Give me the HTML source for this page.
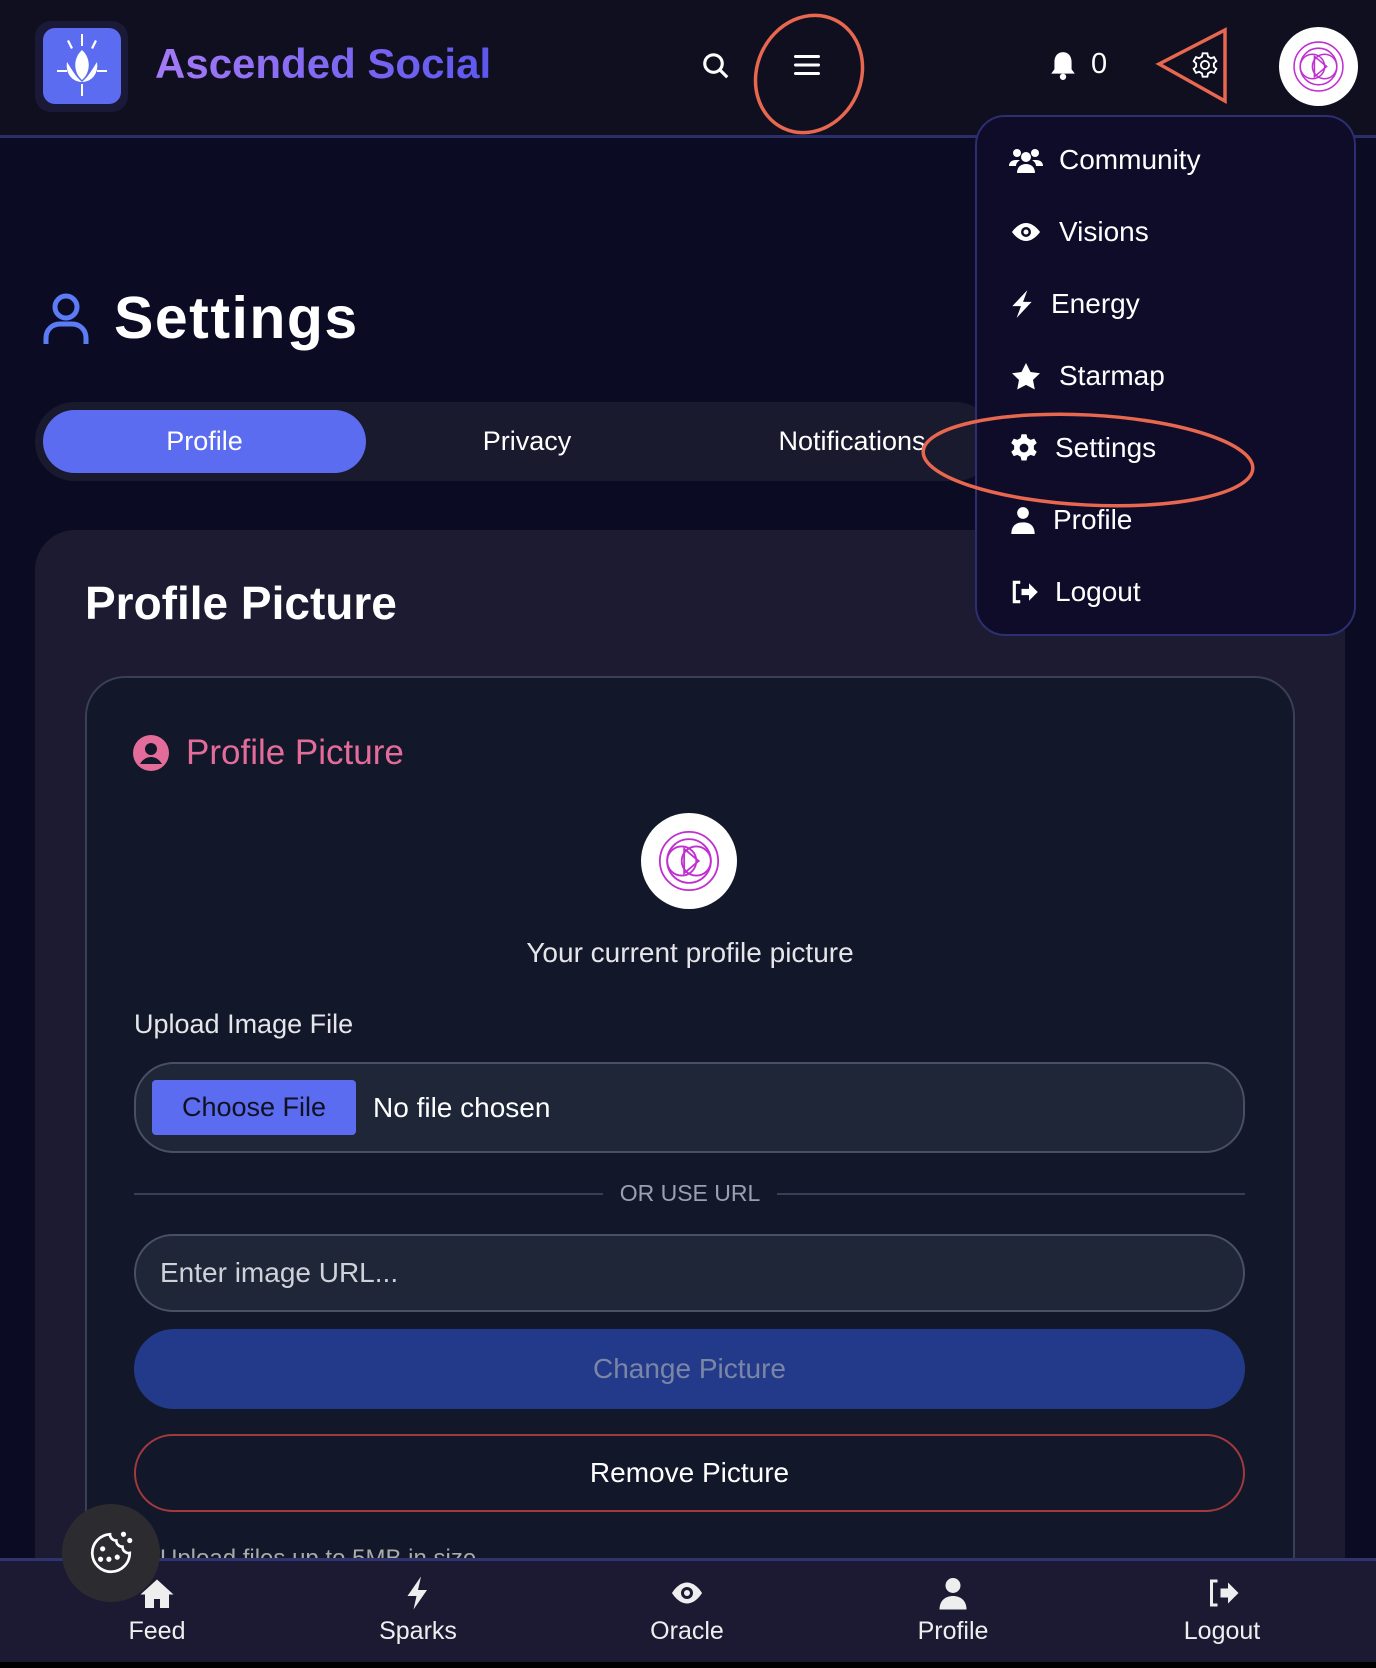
<!DOCTYPE html>
<html style="width:1376px;height:1668px;overflow:hidden"><head><meta charset="utf-8"><style>
*{box-sizing:border-box;margin:0;padding:0}
body{width:1376px;height:1668px;background:#0c0b24;font-family:"Liberation Sans",sans-serif;color:#fff;position:relative;overflow:hidden}
.a{position:absolute}
.hdr{left:0;top:0;width:1376px;height:138px;background:#0f0f20;border-bottom:3px solid #2a2f6a}
.menu{left:975px;top:115px;width:381px;height:521px;background:#0e0c29;border:2px solid #2c2f70;border-radius:30px}
.mi{position:absolute;left:32px;font-size:28px;display:flex;align-items:center;gap:16px}
.mi svg{width:34px;height:30px}
.inp{left:134px;width:1111px;background:#1e2638;border:2px solid #4a5063;border-radius:40px}
.nav{left:0;top:1558px;width:1376px;height:104px;background:#1c1a33;border-top:3px solid #2f3470}
.ni{position:absolute;top:14px;width:140px;margin-left:-70px;text-align:center;font-size:25px;color:#eee}
.ni svg{display:block;margin:0 auto 6px;width:36px;height:36px}
</style></head><body>
<div class="a hdr"></div>
<div class="a" style="left:35px;top:21px;width:93px;height:91px;background:#1a1a38;border-radius:16px"></div>
<div class="a" style="left:43px;top:28px;width:78px;height:76px;background:#5b6cf0;border-radius:12px"></div>
<svg class="a" style="left:43px;top:28px" width="78" height="76" viewBox="0 0 78 76" fill="#fff"><path d="M39 22 C30 30 30 44 39 52 C48 44 48 30 39 22Z"/><path d="M24 34 C22 46 30 54 39 54 C32 48 28 40 24 34Z M54 34 C56 46 48 54 39 54 C46 48 50 40 54 34Z"/><rect x="38" y="6" width="2" height="12"/><rect x="38" y="56" width="2" height="12"/><rect x="14" y="42" width="10" height="2"/><rect x="54" y="42" width="10" height="2"/><path d="M26 12l4 8-2 1-4-8zM52 12l-4 8 2 1 4-8z"/></svg>
<div class="a" style="left:155px;top:40px;font-size:42px;font-weight:bold;background:linear-gradient(90deg,#a57af6,#5d58ee);-webkit-background-clip:text;color:transparent">Ascended Social</div>
<svg class="a" style="left:701px;top:51px" width="30" height="30" viewBox="0 0 24 24" fill="none" stroke="#fff" stroke-width="2.5"><circle cx="10" cy="10" r="7"/><path d="M15 15l6 6"/></svg>
<svg class="a" style="left:794px;top:53px" width="26" height="24" viewBox="0 0 26 24" fill="#fff"><rect y="2" width="26" height="3" rx="1.5"/><rect y="10.5" width="26" height="3" rx="1.5"/><rect y="19" width="26" height="3" rx="1.5"/></svg>
<svg class="a" style="left:1050px;top:50px" width="26" height="30" viewBox="0 0 24 28" fill="#fff"><path d="M12 2c-5 0-8 4-8 9v7l-3 4h22l-3-4v-7c0-5-3-9-8-9z"/><circle cx="12" cy="25" r="3"/></svg>
<div class="a" style="left:1091px;top:48px;font-size:29px">0</div>
<svg class="a" style="left:1191px;top:51px" width="28" height="28" viewBox="0 0 24 24" fill="none" stroke="#fff" stroke-width="1.6"><circle cx="12" cy="12" r="3.5"/><path d="M10 2h4l.6 2.8 2.4 1.4 2.7-.9 2 3.4-2.1 1.9v2.8l2.1 1.9-2 3.4-2.7-.9-2.4 1.4L14 22h-4l-.6-2.8-2.4-1.4-2.7.9-2-3.4 2.1-1.9v-2.8L2.3 8.7l2-3.4 2.7.9 2.4-1.4z"/></svg>
<div class="a" style="left:1279px;top:27px;width:79px;height:79px;border-radius:50%;background:#fff"></div>
<svg class="a" style="left:1290px;top:38px" width="57" height="57" viewBox="0 0 56 56" fill="none" stroke="#c030d0" stroke-width="1.5"><circle cx="28" cy="28" r="24"/><circle cx="28" cy="28" r="18"/><circle cx="22" cy="28" r="12"/><circle cx="34" cy="28" r="12"/><path d="M24 18v20l12-10z"/></svg>

<svg class="a" style="left:42px;top:292px" width="48" height="54" viewBox="0 0 48 54" fill="none" stroke="#5b7cf5" stroke-width="5"><circle cx="24" cy="15" r="11"/><path d="M4 52v-6c0-8 6-14 14-14h12c8 0 14 6 14 14v6"/></svg>
<div class="a" style="left:114px;top:284px;font-size:59px;font-weight:bold;letter-spacing:1.5px">Settings</div>

<div class="a" style="left:35px;top:402px;width:960px;height:79px;background:#1a1a2e;border-radius:40px"></div>
<div class="a" style="left:43px;top:410px;width:323px;height:63px;background:#5b6cf0;border-radius:32px;text-align:center;line-height:63px;font-size:27px">Profile</div>
<div class="a" style="left:427px;top:410px;width:200px;text-align:center;line-height:63px;font-size:27px">Privacy</div>
<div class="a" style="left:752px;top:410px;width:200px;text-align:center;line-height:63px;font-size:27px">Notifications</div>

<div class="a" style="left:35px;top:530px;width:1310px;height:1138px;background:#1c1b32;border-radius:40px 40px 0 0"></div>
<div class="a" style="left:85px;top:576px;font-size:46px;font-weight:bold">Profile Picture</div>
<div class="a" style="left:85px;top:676px;width:1210px;height:992px;background:#121829;border:2px solid #3a3f55;border-bottom:none;border-radius:40px 40px 0 0"></div>
<svg class="a" style="left:133px;top:735px" width="36" height="36" viewBox="0 0 36 36"><circle cx="18" cy="18" r="18" fill="#e46c9a"/><circle cx="18" cy="14" r="6" fill="#121829"/><path d="M7 29c3-5 7-7 11-7s8 2 11 7" fill="#121829"/></svg>
<div class="a" style="left:186px;top:733px;font-size:35px;color:#e46c9a">Profile Picture</div>
<div class="a" style="left:641px;top:813px;width:96px;height:96px;border-radius:50%;background:#fff"></div>
<svg class="a" style="left:655px;top:827px" width="68" height="68" viewBox="0 0 56 56" fill="none" stroke="#c030d0" stroke-width="1.5"><circle cx="28" cy="28" r="24"/><circle cx="28" cy="28" r="18"/><circle cx="22" cy="28" r="12"/><circle cx="34" cy="28" r="12"/><path d="M24 18v20l12-10z"/></svg>
<div class="a" style="left:85px;top:937px;width:1210px;text-align:center;font-size:28px;color:#e6e6ea">Your current profile picture</div>
<div class="a" style="left:134px;top:1009px;font-size:27px;color:#e6e6ea">Upload Image File</div>
<div class="a inp" style="top:1062px;height:91px"></div>
<div class="a" style="left:152px;top:1080px;width:204px;height:55px;background:#5b6cf0;border-radius:4px;color:#0f1020;font-size:27px;text-align:center;line-height:55px">Choose File</div>
<div class="a" style="left:373px;top:1092px;font-size:28px">No file chosen</div>
<div class="a" style="left:134px;top:1193px;width:469px;height:2px;background:#3a3f55"></div>
<div class="a" style="left:777px;top:1193px;width:468px;height:2px;background:#3a3f55"></div>
<div class="a" style="left:603px;top:1180px;width:174px;text-align:center;font-size:23px;color:#9ba0b0">OR USE URL</div>
<div class="a inp" style="top:1234px;height:78px"></div>
<div class="a" style="left:160px;top:1257px;font-size:28px;color:#d0d2da">Enter image URL...</div>
<div class="a" style="left:134px;top:1329px;width:1111px;height:80px;background:#233a8a;border-radius:40px;text-align:center;line-height:80px;font-size:28px;color:#7b86a6">Change Picture</div>
<div class="a" style="left:134px;top:1434px;width:1111px;height:78px;border:2px solid #a03a3e;border-radius:40px;text-align:center;line-height:74px;font-size:28px">Remove Picture</div>
<div class="a" style="left:160px;top:1545px;font-size:24px;color:#aaa">Upload files up to 5MB in size.</div>

<div class="a nav">
<div class="ni" style="left:157px"><svg viewBox="0 0 24 24" fill="#eee"><path d="M12 3L1 13h3v9h6v-6h4v6h6v-9h3z"/></svg>Feed</div>
<div class="ni" style="left:418px"><svg viewBox="0 0 24 24" fill="#eee"><path d="M14 1L5 14h6l-2 9 9-13h-6z"/></svg>Sparks</div>
<div class="ni" style="left:687px"><svg viewBox="0 0 24 24"><path d="M12 5C6 5 2 12 2 12s4 7 10 7 10-7 10-7-4-7-10-7z" fill="#eee"/><circle cx="12" cy="12" r="4" fill="#1c1a33"/><circle cx="12" cy="12" r="2" fill="#eee"/></svg>Oracle</div>
<div class="ni" style="left:953px"><svg viewBox="0 0 24 24" fill="#eee"><circle cx="12" cy="7" r="5"/><path d="M3 23c0-6 4-9 9-9s9 3 9 9z"/></svg>Profile</div>
<div class="ni" style="left:1222px"><svg viewBox="0 0 24 24" fill="#eee"><path d="M9 3H4v18h5v-2H6V5h3z"/><path d="M11 9h5V5l7 7-7 7v-4h-5z"/></svg>Logout</div>
</div>
<div class="a" style="left:62px;top:1504px;width:98px;height:98px;border-radius:50%;background:#2c2c30"></div>
<svg class="a" style="left:86px;top:1528px" width="50" height="50" viewBox="0 0 24 24" fill="none" stroke="#fff" stroke-width="1.3"><path d="M21 12a9 9 0 1 1-9.5-9 3 3 0 0 0 3 3 3 3 0 0 0 3 3 3 3 0 0 0 3.5 3z"/><circle cx="8" cy="10" r=".6" fill="#fff"/><circle cx="11" cy="15" r=".6" fill="#fff"/><circle cx="15" cy="14" r=".6" fill="#fff"/><circle cx="7" cy="15" r=".6" fill="#fff"/><circle cx="18" cy="3" r=".6" fill="#fff"/><circle cx="21" cy="6" r=".6" fill="#fff"/></svg>
<div class="a" style="left:0;top:1662px;width:1376px;height:6px;background:#000"></div>

<div class="a menu">
<div class="mi" style="top:27px"><svg viewBox="0 0 34 28" fill="#fff"><circle cx="8" cy="7" r="4"/><circle cx="26" cy="7" r="4"/><circle cx="17" cy="11" r="5"/><path d="M0 20c0-4 3-6 7-6h4c-3 2-4 4-4 6zM34 20c0-4-3-6-7-6h-4c3 2 4 4 4 6zM8 27c0-6 4-9 9-9s9 3 9 9z"/></svg>Community</div>
<div class="mi" style="top:99px"><svg viewBox="0 0 34 28"><path d="M17 5C9 5 3 14 3 14s6 9 14 9 14-9 14-9-6-9-14-9z" fill="#fff"/><circle cx="17" cy="14" r="5" fill="#0e0c29"/><circle cx="17" cy="14" r="2.5" fill="#fff"/></svg>Visions</div>
<div class="mi" style="top:171px"><svg viewBox="0 0 24 28" fill="#fff" style="width:26px"><path d="M17 1L3 16h8l-4 11 14-15h-8z"/></svg>Energy</div>
<div class="mi" style="top:243px"><svg viewBox="0 0 34 28" fill="#fff"><path d="M17 1l4.5 9 9.5 1.3-7 6.6 1.8 9.6L17 22.9 8.2 27.5 10 17.9 3 11.3l9.5-1.3z"/></svg>Starmap</div>
<div class="mi" style="top:315px"><svg viewBox="0 0 24 24" fill="#fff" style="width:30px"><path d="M10 1h4l.7 3 2.6 1.5 2.9-1 2 3.5-2.3 2v3l2.3 2-2 3.5-2.9-1-2.6 1.5-.7 3h-4l-.7-3-2.6-1.5-2.9 1-2-3.5 2.3-2v-3L1.8 8l2-3.5 2.9 1L9.3 4z"/><circle cx="12" cy="12" r="3.5" fill="#0e0c29"/></svg>Settings</div>
<div class="mi" style="top:387px"><svg viewBox="0 0 24 24" fill="#fff" style="width:28px"><circle cx="12" cy="6" r="5"/><path d="M2 24c0-7 4-10 10-10s10 3 10 10z"/></svg>Profile</div>
<div class="mi" style="top:459px"><svg viewBox="0 0 24 24" fill="#fff" style="width:30px"><path d="M9 3H3v18h6v-2.5H5.5v-13H9z"/><path d="M10 9.5h6V5l7 7-7 7v-4.5h-6z"/></svg>Logout</div>
</div>
<svg class="a" style="left:0;top:0" width="1376" height="700" fill="none" stroke="#e8674f" stroke-width="3.5"><ellipse cx="809" cy="74" rx="52" ry="60" transform="rotate(25 809 74)"/><path d="M1159 64L1225 30L1225 101Z"/><ellipse cx="1088" cy="460" rx="165" ry="45" transform="rotate(3 1088 460)"/></svg>
</body></html>
